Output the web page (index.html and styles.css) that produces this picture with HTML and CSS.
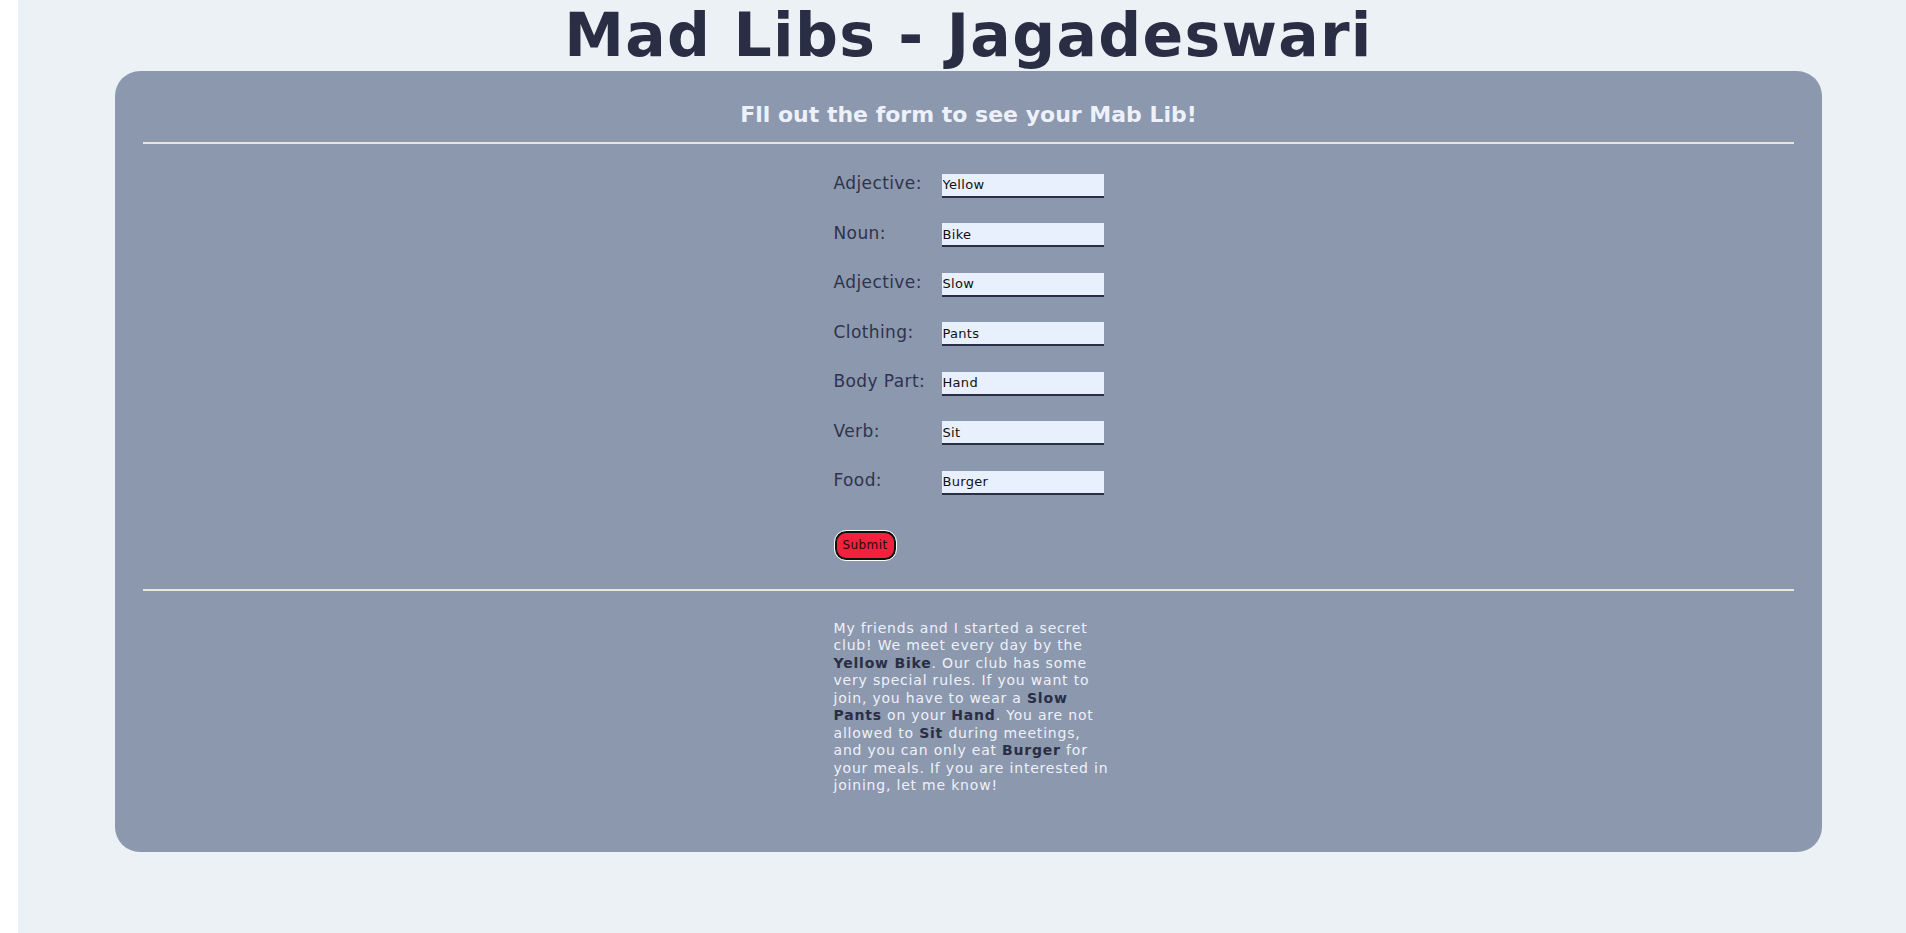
FILE: index.html
```html
<!DOCTYPE html>
<html lang="en">
<head>
<meta charset="utf-8">
<title>Mad Libs - Jagadeswari</title>
<link rel="stylesheet" href="styles.css">
</head>
<body>
<div class="page">
  <div class="container">
    <h1 class="title">Mad Libs - Jagadeswari</h1>
    <main class="card">
      <h2 class="subtitle">Fll out the form to see your Mab Lib!</h2>
      <hr class="rule">
      <form class="form">
        <div class="row"><label class="label">Adjective:</label><input class="field" type="text" value="Yellow"></div>
        <div class="row"><label class="label">Noun:</label><input class="field" type="text" value="Bike"></div>
        <div class="row"><label class="label">Adjective:</label><input class="field" type="text" value="Slow"></div>
        <div class="row"><label class="label">Clothing:</label><input class="field" type="text" value="Pants"></div>
        <div class="row"><label class="label">Body Part:</label><input class="field" type="text" value="Hand"></div>
        <div class="row"><label class="label">Verb:</label><input class="field" type="text" value="Sit"></div>
        <div class="row"><label class="label">Food:</label><input class="field" type="text" value="Burger"></div>
        <button class="submit" type="button">Submit</button>
      </form>
      <hr class="rule">
      <p class="story">My friends and I started a secret<br>club! We meet every day by the<br><b class="word">Yellow Bike</b>. Our club has some<br>very special rules. If you want to<br>join, you have to wear a <b class="word">Slow</b><br><b class="word">Pants</b> on your <b class="word">Hand</b>. You are not<br>allowed to <b class="word">Sit</b> during meetings,<br>and you can only eat <b class="word">Burger</b> for<br>your meals. If you are interested in<br>joining, let me know!</p>
    </main>
  </div>
</div>
</body>
</html>
```

FILE: styles.css
```css
html, body {
  margin: 0;
  padding: 0;
  background: #ffffff;
}

body {
  font-family: "DejaVu Sans", "Liberation Sans", sans-serif;
}

.page {
  margin-left: 18px;
  min-height: 100vh;
  background: #ebf1f5;
  overflow: hidden;
}

.container {
  margin-left: 97px;
  width: 1707px;
}

.title {
  margin: 5px 0 6px;
  height: 60px;
  line-height: 60px;
  font-size: 60px;
  font-weight: bold;
  letter-spacing: 1.3px;
  text-align: center;
  color: #2a2e45;
}

.card {
  background: #8b98ae;
  border-radius: 25px;
  padding: 30px 28px 57px;
}

.subtitle {
  margin: 0;
  font-size: 22px;
  line-height: 27px;
  font-weight: bold;
  text-align: center;
  color: #eef1fa;
}

.rule {
  margin: 14px 0 0;
  height: 0;
  border: none;
  border-top: 2px solid #e9e6dc;
}

.form {
  width: 270px;
  margin: 29px auto 0;
  display: flex;
  flex-direction: column;
  align-items: flex-start;
}

.row {
  display: flex;
  align-items: baseline;
  height: 24px;
  margin-bottom: 25.5px;
}

.label {
  width: 108px;
  font-size: 17px;
  letter-spacing: 0.4px;
  color: #2f334d;
}

.field {
  box-sizing: border-box;
  width: 162px;
  height: 24px;
  margin: 0;
  padding: 1px 2px 1px 1px;
  border: none;
  border-bottom: 2px solid #2a2e45;
  background: #e8effd;
  font-family: "DejaVu Sans", "Liberation Sans", sans-serif;
  font-size: 13px;
  letter-spacing: 0.3px;
  color: #111111;
  outline: none;
}

.submit {
  margin: 11px 0 0 1px;
  box-sizing: border-box;
  width: 61px;
  height: 29px;
  padding: 0;
  border: 2px solid #111111;
  border-radius: 11px;
  outline: 1px solid #ffffff;
  background: #f2213d;
  font-family: "DejaVu Sans", "Liberation Sans", sans-serif;
  font-size: 12px;
  letter-spacing: 0.4px;
  color: #2a0a10;
}

.form + .rule {
  margin-top: 29px;
}

.story {
  width: 270px;
  margin: 29px auto 0;
  font-size: 14px;
  line-height: 17.5px;
  letter-spacing: 0.8px;
  color: #eef1fa;
  white-space: nowrap;
}

.word {
  color: #2a2e45;
  font-weight: bold;
}
```
